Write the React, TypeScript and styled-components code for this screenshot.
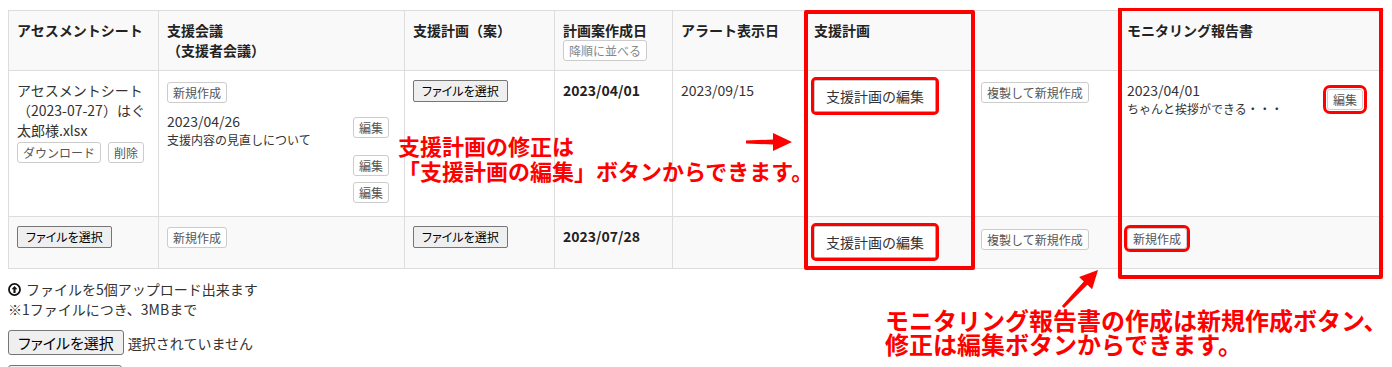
import React from "react";
import styled, { createGlobalStyle, css } from "styled-components";

const GlobalStyle = createGlobalStyle`
  html { overflow: hidden; background: #fff; }
  body {
    margin: 8px;
    font-family: "Noto Sans CJK JP", "Noto Sans", sans-serif;
    font-size: 14px;
    line-height: 20px;
    color: #333;
  }
  * { box-sizing: border-box; }
`;

const Page = styled.div`
  position: relative;
`;

const Table = styled.table`
  width: 100%;
  margin-top: 2px;
  table-layout: fixed;
  border-collapse: collapse;
  border: 1px solid #ddd;
`;

const Col = styled.col<{ $w: number }>`
  width: ${(p) => p.$w}px;
`;

const Th = styled.th`
  background: #f9f9f9;
  border: 1px solid #ddd;
  padding: 9px 8px;
  text-align: left;
  vertical-align: top;
  font-weight: 700;
  color: #222;
  white-space: nowrap;
`;

const Tr = styled.tr<{ $striped?: boolean }>`
  background: ${(p) => (p.$striped ? "#f9f9f9" : "#fff")};
`;

const Td = styled.td`
  border: 1px solid #ddd;
  padding: 9px 8px 10px;
  vertical-align: top;
`;

const Stack = styled.div<{ $gap?: number }>`
  display: flex;
  flex-direction: column;
  align-items: flex-start;
  gap: ${(p) => p.$gap ?? 0}px;
`;

const SmallButton = styled.button<{ $mark?: "tight" | "loose"; $mt?: number; $tone?: "muted" }>`
  display: inline-block;
  margin: ${(p) => p.$mt ?? 0}px 0 0;
  font-family: inherit;
  font-size: 12px;
  line-height: 17px;
  padding: 1px 5px;
  color: ${(p) => (p.$tone === "muted" ? "#888" : "#555")};
  background: #fff;
  border: 1px solid #ccc;
  border-radius: 3px;
  white-space: nowrap;
  cursor: pointer;
  ${(p) =>
    p.$mark &&
    css`
      outline: 3px solid #f00;
      outline-offset: ${p.$mark === "loose" ? 1 : 0}px;
    `}
`;

const PlanEditButton = styled.button`
  display: inline-block;
  font-family: inherit;
  font-size: 14px;
  line-height: 18px;
  padding: 6px 11px;
  color: #333;
  background: #fff;
  border: 1px solid;
  border-color: #ccc #aaa #aaa #ccc;
  border-radius: 2px;
  white-space: nowrap;
  outline: 3px solid #f00;
  outline-offset: 0;
  cursor: pointer;
`;

const FileButton = styled.button<{ $large?: boolean }>`
  display: inline-block;
  font-family: inherit;
  font-feature-settings: "palt";
  font-size: ${(p) => (p.$large ? 15 : 12)}px;
  line-height: 20px;
  height: ${(p) => (p.$large ? 25 : 22)}px;
  padding: 0 ${(p) => (p.$large ? 9 : 8)}px;
  color: #000;
  background: #efefef;
  border: 1px solid #767676;
  border-radius: ${(p) => (p.$large ? 3 : 2)}px;
  white-space: nowrap;
  cursor: pointer;
`;

const SubmitButton = styled.button`
  display: block;
  width: 114px;
  height: 25px;
  background: #efefef;
  border: 1px solid #767676;
  border-radius: 3px;
`;

const FileName = styled.div`
  white-space: nowrap;
`;

const ButtonRow = styled.div`
  display: flex;
  gap: 7px;
  margin-top: 2px;
`;

const MeetingList = styled.div`
  align-self: stretch;
  display: flex;
  flex-direction: column;
  gap: 6px;
  margin: 8px 7px 3px 0;
`;

const MeetingItem = styled.div`
  display: flex;
  justify-content: space-between;
  align-items: flex-start;
  min-height: 21px;
`;

const DateText = styled.div<{ $bold?: boolean }>`
  font-weight: ${(p) => (p.$bold ? 700 : 400)};
  color: ${(p) => (p.$bold ? "#222" : "#333")};
`;

const NoteText = styled.div`
  font-size: 12px;
  line-height: 18px;
`;

const ReportItem = styled.div`
  display: flex;
  justify-content: space-between;
  align-items: center;
  padding-right: 13px;
`;

const Notes = styled.div`
  margin-top: 10px;
`;

const NoteLine = styled.div`
  display: flex;
  align-items: center;
  gap: 5px;
`;

const UploadRow = styled.div`
  display: flex;
  align-items: center;
  gap: 4px;
  margin-top: 11px;
`;

const SubmitRow = styled.div`
  margin-top: 10px;
`;

const ColumnFrame = styled.div<{ $x: number; $y: number; $w: number; $h: number }>`
  position: absolute;
  left: ${(p) => p.$x}px;
  top: ${(p) => p.$y}px;
  width: ${(p) => p.$w}px;
  height: ${(p) => p.$h}px;
  border: 4px solid #f00;
  border-radius: 2px;
  pointer-events: none;
`;

const Annotation = styled.div<{ $x: number; $y: number; $size: number; $lh: number }>`
  position: absolute;
  left: ${(p) => p.$x}px;
  top: ${(p) => p.$y}px;
  color: #f00;
  font-weight: 700;
  font-size: ${(p) => p.$size}px;
  line-height: ${(p) => p.$lh}px;
  white-space: nowrap;
  pointer-events: none;
`;

const ArrowSvg = styled.svg<{ $x: number; $y: number }>`
  position: absolute;
  left: ${(p) => p.$x}px;
  top: ${(p) => p.$y}px;
  overflow: visible;
  pointer-events: none;
`;

const UploadIcon = () => (
  <svg width="13" height="13" viewBox="0 0 16 16" aria-hidden="true">
    <circle cx="8" cy="8" r="6.8" fill="none" stroke="#111" strokeWidth="2.2" />
    <path d="M8 3.6 L11.6 7.6 H9.3 V12.2 H6.7 V7.6 H4.4 Z" fill="#111" />
  </svg>
);

export default function App() {
  return (
    <>
      <GlobalStyle />
      <Page>
        <Table>
          <colgroup>
            <Col $w={150} />
            <Col $w={246} />
            <Col $w={150} />
            <Col $w={118} />
            <Col $w={133} />
            <Col $w={167} />
            <Col $w={146} />
            <Col $w={266} />
          </colgroup>
          <thead>
            <tr>
              <Th>アセスメントシート</Th>
              <Th>
                支援会議
                <br />
                （支援者会議）
              </Th>
              <Th>支援計画（案）</Th>
              <Th>
                <Stack>
                  計画案作成日
                  <SmallButton $tone="muted">降順に並べる</SmallButton>
                </Stack>
              </Th>
              <Th>アラート表示日</Th>
              <Th>支援計画</Th>
              <Th />
              <Th>モニタリング報告書</Th>
            </tr>
          </thead>
          <tbody>
            <Tr>
              <Td>
                <FileName>
                  アセスメントシート
                  <br />
                  （2023-07-27）はぐ
                  <br />
                  太郎様.xlsx
                </FileName>
                <ButtonRow>
                  <SmallButton>ダウンロード</SmallButton>
                  <SmallButton>削除</SmallButton>
                </ButtonRow>
              </Td>
              <Td>
                <Stack>
                  <SmallButton $mt={2}>新規作成</SmallButton>
                  <MeetingList>
                    <MeetingItem>
                      <div>
                        <DateText>2023/04/26</DateText>
                        <NoteText>支援内容の見直しについて</NoteText>
                      </div>
                      <SmallButton $mt={6}>編集</SmallButton>
                    </MeetingItem>
                    <MeetingItem>
                      <span />
                      <SmallButton>編集</SmallButton>
                    </MeetingItem>
                    <MeetingItem>
                      <span />
                      <SmallButton>編集</SmallButton>
                    </MeetingItem>
                  </MeetingList>
                </Stack>
              </Td>
              <Td>
                <FileButton>ファイルを選択</FileButton>
              </Td>
              <Td>
                <DateText $bold>2023/04/01</DateText>
              </Td>
              <Td>
                <DateText>2023/09/15</DateText>
              </Td>
              <Td>
                <PlanEditButton>支援計画の編集</PlanEditButton>
              </Td>
              <Td>
                <SmallButton $mt={2}>複製して新規作成</SmallButton>
              </Td>
              <Td>
                <ReportItem>
                  <div>
                    <DateText>2023/04/01</DateText>
                    <NoteText>ちゃんと挨拶ができる・・・</NoteText>
                  </div>
                  <SmallButton $mark="loose">編集</SmallButton>
                </ReportItem>
              </Td>
            </Tr>
            <Tr $striped>
              <Td>
                <FileButton>ファイルを選択</FileButton>
              </Td>
              <Td>
                <SmallButton $mt={1}>新規作成</SmallButton>
              </Td>
              <Td>
                <FileButton>ファイルを選択</FileButton>
              </Td>
              <Td>
                <DateText $bold>2023/07/28</DateText>
              </Td>
              <Td />
              <Td>
                <PlanEditButton>支援計画の編集</PlanEditButton>
              </Td>
              <Td>
                <SmallButton $mt={3}>複製して新規作成</SmallButton>
              </Td>
              <Td>
                <SmallButton $mt={2} $mark="tight">
                  新規作成
                </SmallButton>
              </Td>
            </Tr>
          </tbody>
        </Table>

        <Notes>
          <NoteLine>
            <UploadIcon />
            ファイルを5個アップロード出来ます
          </NoteLine>
          <div>※1ファイルにつき、3MBまで</div>
        </Notes>
        <UploadRow>
          <FileButton $large>ファイルを選択</FileButton>
          <span>選択されていません</span>
        </UploadRow>
        <SubmitRow>
          <SubmitButton aria-label="アップロード" />
        </SubmitRow>

        <ColumnFrame $x={796} $y={0} $w={171} $h={260} />
        <ColumnFrame $x={1110} $y={-3} $w={265} $h={272} />

        <Annotation $x={390} $y={123} $size={22} $lh={25}>
          支援計画の修正は
          <br />
          「支援計画の編集」ボタンからできます。
        </Annotation>
        <ArrowSvg $x={737} $y={122} width="50" height="22" viewBox="0 0 50 22">
          <polygon points="1,8.5 28,7.5 28,1 47,10 28,19 28,12.5 1,11.5" fill="#f00" />
        </ArrowSvg>

        <Annotation $x={877} $y={298} $size={24} $lh={24}>
          モニタリング報告書の作成は新規作成ボタン、
          <br />
          修正は編集ボタンからできます。
        </Annotation>
        <ArrowSvg $x={1047} $y={254} width="50" height="50" viewBox="0 0 50 50">
          <polygon
            points="9.1,44 32.4,20.8 37.1,25.3 43,6 24.1,12.9 28.8,17.4 6.9,42"
            fill="#f00"
          />
        </ArrowSvg>
      </Page>
    </>
  );
}
